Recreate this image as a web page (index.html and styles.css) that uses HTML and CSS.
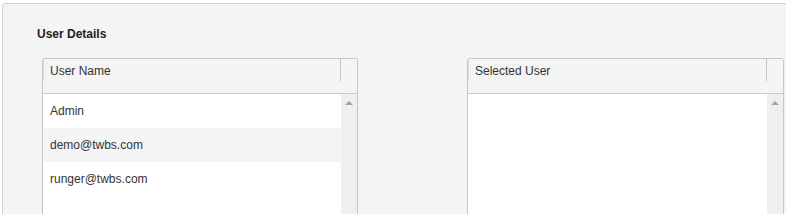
FILE: index.html
```html
<!DOCTYPE html>
<html lang="en">
<head>
    <meta charset="UTF-8">
    <title>User Details</title>
    <link rel="stylesheet" href="styles.css">
</head>
<body>
    <div class="panel">
        <h3 class="panel-title">User Details</h3>
        <div class="grids">
            <div class="grid">
                <div class="grid-header">
                    <div class="header-cell">User Name</div>
                    <div class="header-spacer"></div>
                </div>
                <div class="grid-body">
                    <div class="rows">
                        <div class="row">Admin</div>
                        <div class="row alt">demo@twbs.com</div>
                        <div class="row">runger@twbs.com</div>
                    </div>
                    <div class="scrollbar"><span class="arrow-up"></span></div>
                </div>
            </div>
            <div class="grid">
                <div class="grid-header">
                    <div class="header-cell">Selected User</div>
                    <div class="header-spacer"></div>
                </div>
                <div class="grid-body">
                    <div class="rows"></div>
                    <div class="scrollbar"><span class="arrow-up"></span></div>
                </div>
            </div>
        </div>
    </div>
</body>
</html>
```

FILE: styles.css
```css
body {
    margin: 0;
    background: #fff;
    font-family: "Liberation Sans", Arial, sans-serif;
    font-size: 12px;
    color: #333;
    overflow: hidden;
}

.panel {
    margin: 3px 0 0 2px;
    width: 800px;
    height: 211px;
    overflow: hidden;
    background: #f4f4f4;
    border: 1px solid #cfcfcf;
    border-bottom: none;
    border-radius: 4px 4px 0 0;
    padding: 0 0 0 34px;
    box-sizing: border-box;
}

.panel-title {
    margin: 0;
    padding-top: 23px;
    height: 31px;
    line-height: 14px;
    font-size: 12px;
    font-weight: bold;
    color: #222;
}

.grids {
    display: flex;
    gap: 109px;
    margin-left: 5px;
}

.grid {
    width: 316px;
    box-sizing: border-box;
    border: 1px solid #c6c6c6;
    border-bottom: none;
    border-radius: 3px 3px 0 0;
    background: #fff;
}

.grid:last-child {
    width: 317px;
}

.grid-header {
    display: flex;
    height: 34px;
    background: #f4f4f4;
    border-bottom: 1px solid #c9c9c9;
}

.header-cell {
    flex: 1;
    height: 22px;
    padding: 5px 0 0 6px;
    box-sizing: border-box;
    border-left: 1px solid #dcdcdc;
    border-right: 1px solid #c6c6c6;
    line-height: 14px;
}

.header-spacer {
    width: 16px;
}

.grid-body {
    display: flex;
    height: 120px;
}

.rows {
    flex: 1;
}

.row {
    height: 34px;
    line-height: 34px;
    padding-left: 7px;
}

.row.alt {
    background: #f4f4f4;
}

.scrollbar {
    width: 16px;
    background: #efefef;
    display: flex;
    justify-content: center;
    padding-top: 7px;
    box-sizing: border-box;
}

.arrow-up {
    width: 0;
    height: 0;
    border-left: 4px solid transparent;
    border-right: 4px solid transparent;
    border-bottom: 4px solid #a3a3a3;
}
```
